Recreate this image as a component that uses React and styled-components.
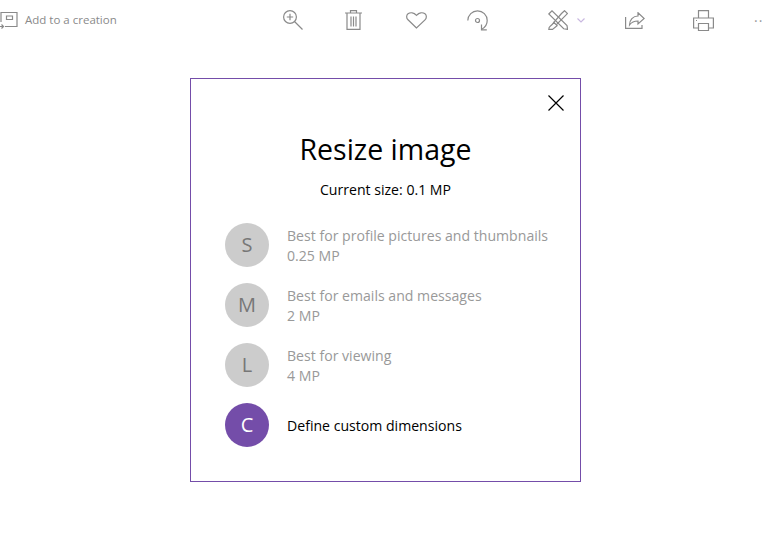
import styled, { createGlobalStyle } from "styled-components";

const GlobalStyle = createGlobalStyle`
  html, body {
    margin: 0;
    padding: 0;
    background: #fff;
    font-family: "Open Sans", "Liberation Sans", sans-serif;
  }
`;

const iconProps = {
  fill: "none",
  stroke: "#8a8a8a",
  strokeWidth: 1.2,
};

function CreationIcon() {
  return (
    <svg width="18" height="18" viewBox="0 0 18 18" {...iconProps}>
      <path d="M1 11V1.500h16v14H5" />
      <path d="M6.500 5h6v3.500h-6z" />
      <path d="M0 15.500h3M1.500 13.500l2 2-2 2" />
    </svg>
  );
}

function ZoomIcon() {
  return (
    <svg width="20" height="20" viewBox="0 0 20 20" {...iconProps}>
      <circle cx="7" cy="7" r="6.400" />
      <path d="M11.500 11.500l8 8M7 3.800v6.400M3.800 7h6.400" />
    </svg>
  );
}

function TrashIcon() {
  return (
    <svg width="17" height="20" viewBox="0 0 17 20" {...iconProps}>
      <path d="M0 3h17M5.500 3V.6h6V3M2 3v16.400h13V3M6 6.500v10M8.500 6.500v10M11 6.500v10" />
    </svg>
  );
}

function HeartIcon() {
  return (
    <svg width="21" height="17" viewBox="0 0 21 17" {...iconProps}>
      <path d="M10.500 16L2 7.800C.2 6 .2 3.200 2 1.800 4.200.1 7.800.4 10.500 3.300 13.200.4 16.800.1 19 1.800c1.800 1.400 1.800 4.200 0 6z" />
    </svg>
  );
}

function RotateIcon() {
  return (
    <svg width="21" height="21" viewBox="0 0 21 21" {...iconProps}>
      <path d="M.8 10.500C1 5 5.200.8 10.500.8c5.400 0 9.700 4.300 9.700 9.700 0 3.800-2.200 7-5.500 8.700" />
      <circle cx="10.500" cy="10.500" r="2" />
      <path d="M14.500 14.500v5.300h5.300" />
    </svg>
  );
}

function EditIcon() {
  return (
    <svg width="20" height="20" viewBox="0 0 20 20" {...iconProps}>
      <path d="M.8 4L4 .8 19 15.500l.6 3.900-3.900-.6z" />
      <path d="M13.500 3.500l3-2.800 2.900 2.900-12 12-1.500-3.200z" />
      <path d="M5.900 12.400l3.200 3.200-4.600 3.800H.8c0-1.600.4-2.500 1.400-3.200 1.500-1 2.500-2 3.700-3.800z" fill="#fff" />
    </svg>
  );
}

function ChevronIcon() {
  return (
    <svg width="8" height="5" viewBox="0 0 8 5" fill="none" stroke="#c9b8e0" strokeWidth="1.200">
      <path d="M.5.500L4 4 7.500.500" />
    </svg>
  );
}

function ShareIcon() {
  return (
    <svg width="20" height="17" viewBox="0 0 20 17" {...iconProps}>
      <path d="M.6 5v11.400h16.400V13" />
      <path d="M13 .8l6.200 5.700-6.200 5.500V9C9 9 6.500 10 4.500 13 4.500 8 8 4 13 4z" />
    </svg>
  );
}

function PrintIcon() {
  return (
    <svg width="21" height="21" viewBox="0 0 21 21" {...iconProps}>
      <path d="M5.500 8V.6h10V8M5.500 18H.6V8h19.800v10h-4.900" />
      <path d="M5.500 13.500h10v7h-10zM3 10.500h1" />
    </svg>
  );
}

const Toolbar = styled.div`
  display: flex;
  align-items: center;
  height: 40px;
`;

const AddButton = styled.div`
  display: flex;
  flex: none;
  align-items: center;
  gap: 7px;
  width: 283px;
  color: #8a8a8a;
  font-size: 11.500px;
`;

const AddLabel = styled.span`
  padding-bottom: 2px;
`;

const ToolButton = styled.div`
  display: flex;
  align-items: center;
  gap: 9px;
  margin-left: ${(p) => p.$gap}px;
`;

const More = styled.span`
  margin-left: 40px;
  color: #9a9a9a;
  font-size: 14px;
  letter-spacing: 1px;
`;

const Modal = styled.section`
  box-sizing: border-box;
  width: 391px;
  height: 404px;
  margin: 38px 0 0 190px;
  border: 1px solid #744da9;
  padding: 16px 16px 0 34px;
  background: #fff;
`;

const CloseRow = styled.div`
  display: flex;
  justify-content: flex-end;
  height: 20px;
`;

const Title = styled.h2`
  margin: 14px 0 0 -18px;
  font-size: 28.500px;
  font-weight: 400;
  line-height: 40px;
  color: #000;
  text-align: center;
`;

const Current = styled.p`
  margin: 11px 0 0 -18px;
  font-size: 14.100px;
  line-height: 20px;
  color: #000;
  text-align: center;
`;

const Options = styled.div`
  display: flex;
  flex-direction: column;
  gap: 16px;
  margin-top: 23px;
`;

const Option = styled.div`
  display: flex;
  align-items: center;
  gap: 18px;
`;

const Avatar = styled.div`
  flex: none;
  display: flex;
  align-items: center;
  justify-content: center;
  box-sizing: border-box;
  width: 44px;
  height: 44px;
  padding-bottom: 2px;
  border-radius: 50%;
  background: ${(p) => (p.$active ? "#744da9" : "#cccccc")};
  color: ${(p) => (p.$active ? "#fff" : "#777777")};
  font-size: 20px;
`;

const Label = styled.div`
  padding-top: 2px;
  font-size: 14.100px;
  line-height: 20px;
  color: ${(p) => (p.$active ? "#000" : "#999999")};
`;

const options = [
  { letter: "S", text: "Best for profile pictures and thumbnails", size: "0.25 MP" },
  { letter: "M", text: "Best for emails and messages", size: "2 MP" },
  { letter: "L", text: "Best for viewing", size: "4 MP" },
];

export default function App() {
  return (
    <>
      <GlobalStyle />
      <Toolbar>
        <AddButton>
          <CreationIcon />
          <AddLabel>Add to a creation</AddLabel>
        </AddButton>
        <ToolButton $gap={0}><ZoomIcon /></ToolButton>
        <ToolButton $gap={42}><TrashIcon /></ToolButton>
        <ToolButton $gap={44}><HeartIcon /></ToolButton>
        <ToolButton $gap={40}><RotateIcon /></ToolButton>
        <ToolButton $gap={60}><EditIcon /><ChevronIcon /></ToolButton>
        <ToolButton $gap={40}><ShareIcon /></ToolButton>
        <ToolButton $gap={48}><PrintIcon /></ToolButton>
        <More>··</More>
      </Toolbar>
      <Modal>
        <CloseRow>
          <svg width="16" height="16" viewBox="0 0 16 16" fill="none" stroke="#000" strokeWidth="1.200">
            <path d="M.5.500l15 15M15.500.500l-15 15" />
          </svg>
        </CloseRow>
        <Title>Resize image</Title>
        <Current>Current size: 0.1 MP</Current>
        <Options>
          {options.map((o) => (
            <Option key={o.letter}>
              <Avatar>{o.letter}</Avatar>
              <Label>
                {o.text}
                <br />
                {o.size}
              </Label>
            </Option>
          ))}
          <Option>
            <Avatar $active>C</Avatar>
            <Label $active>Define custom dimensions</Label>
          </Option>
        </Options>
      </Modal>
    </>
  );
}
